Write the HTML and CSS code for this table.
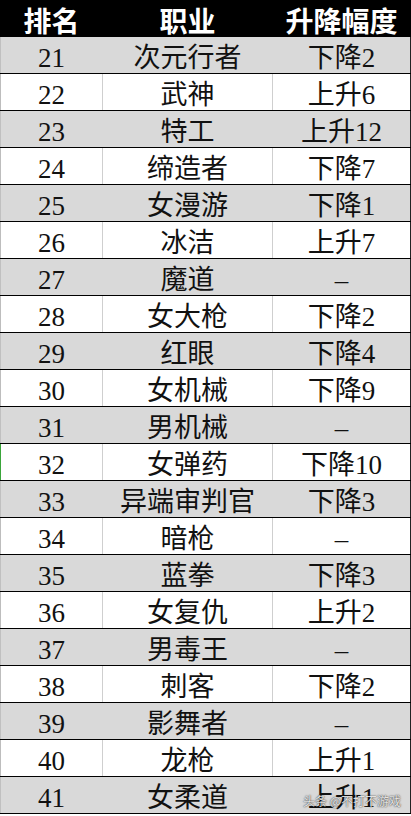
FILE: index.html
```html
<!DOCTYPE html>
<html lang="zh-CN">
<head>
<meta charset="utf-8">
<title>排名</title>
<link rel="stylesheet" href="styles.css">
</head>
<body>
<div class="sheet">
  <div class="row head"><div class="c">排名</div><div class="c">职业</div><div class="c">升降幅度</div></div>
  <div class="row g"><div class="c">21</div><div class="c">次元行者</div><div class="c">下降2</div></div>
  <div class="row w"><div class="c">22</div><div class="c">武神</div><div class="c">上升6</div></div>
  <div class="row g"><div class="c">23</div><div class="c">特工</div><div class="c">上升12</div></div>
  <div class="row w"><div class="c">24</div><div class="c">缔造者</div><div class="c">下降7</div></div>
  <div class="row g"><div class="c">25</div><div class="c">女漫游</div><div class="c">下降1</div></div>
  <div class="row w"><div class="c">26</div><div class="c">冰洁</div><div class="c">上升7</div></div>
  <div class="row g"><div class="c">27</div><div class="c">魔道</div><div class="c">–</div></div>
  <div class="row w"><div class="c">28</div><div class="c">女大枪</div><div class="c">下降2</div></div>
  <div class="row g"><div class="c">29</div><div class="c">红眼</div><div class="c">下降4</div></div>
  <div class="row w"><div class="c">30</div><div class="c">女机械</div><div class="c">下降9</div></div>
  <div class="row g"><div class="c">31</div><div class="c">男机械</div><div class="c">–</div></div>
  <div class="row w sel"><div class="c">32</div><div class="c">女弹药</div><div class="c">下降10</div></div>
  <div class="row g"><div class="c">33</div><div class="c">异端审判官</div><div class="c">下降3</div></div>
  <div class="row w"><div class="c">34</div><div class="c">暗枪</div><div class="c">–</div></div>
  <div class="row g"><div class="c">35</div><div class="c">蓝拳</div><div class="c">下降3</div></div>
  <div class="row w"><div class="c">36</div><div class="c">女复仇</div><div class="c">上升2</div></div>
  <div class="row g"><div class="c">37</div><div class="c">男毒王</div><div class="c">–</div></div>
  <div class="row w"><div class="c">38</div><div class="c">刺客</div><div class="c">下降2</div></div>
  <div class="row g"><div class="c">39</div><div class="c">影舞者</div><div class="c">–</div></div>
  <div class="row w"><div class="c">40</div><div class="c">龙枪</div><div class="c">上升1</div></div>
  <div class="row g last"><div class="c">41</div><div class="c">女柔道</div><div class="c">上升1</div></div>
  <div class="mark">头条 @不打不游戏</div>
</div>
</body>
</html>
```

FILE: styles.css
```css
html, body {
  margin: 0;
  padding: 0;
  background: #ffffff;
}
.sheet {
  position: relative;
  width: 411px;
  font-family: "Liberation Serif", "Noto Sans CJK SC", serif;
  color: #111;
}
.row {
  display: grid;
  grid-template-columns: 102px 170px 139px;
  height: 36px;
  border-bottom: 1px solid #000;
}
.row .c {
  display: flex;
  align-items: center;
  justify-content: center;
  box-sizing: border-box;
  font-size: 27px;
  line-height: 28px;
  padding-top: 5px;
  white-space: nowrap;
  border-left: 1px solid #cfcfcf;
}
.row .c:first-child {
  border-left: 1px solid #bdbdbd;
}
.row .c:last-child {
  border-right: 1px solid #222;
}
.g { background: #d9d9d9; }
.w { background: #ffffff; }
.g .c { border-left-color: #d9d9d9; }
.g .c:first-child { border-left-color: #c0c0c0; }
.sel .c:first-child { border-left-color: #3aa53a; }
.head {
  background: #000;
  border-bottom-color: #000;
}
.head .c {
  font-family: "Noto Sans CJK SC", sans-serif;
  font-weight: 700;
  font-size: 28px;
  line-height: 28px;
  padding-top: 3px;
  color: #fff;
  border-left-color: #000;
}
.head .c:first-child { border-left-color: #000; }
.head .c:last-child { border-right-color: #000; }
.mark {
  position: absolute;
  right: 10px;
  bottom: 6px;
  font-family: "Noto Sans CJK SC", sans-serif;
  font-size: 12px;
  line-height: 14px;
  color: rgba(255, 255, 255, 0.85);
  text-shadow: 0 0 2px rgba(0, 0, 0, 0.6), 0 0 1px rgba(0, 0, 0, 0.6);
}
```
